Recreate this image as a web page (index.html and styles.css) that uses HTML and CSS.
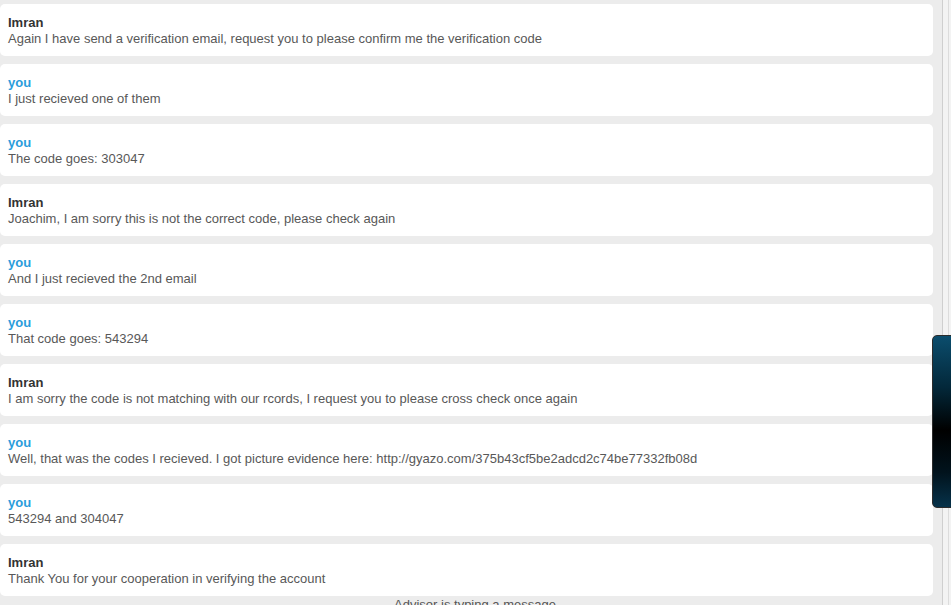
FILE: index.html
```html
<!DOCTYPE html>
<html>
<head>
<meta charset="utf-8">
<link rel="stylesheet" href="styles.css">
</head>
<body>
<div class="page">
  <div class="chat">
    <div class="messages">
      <div class="msg"><div class="name advisor">Imran</div><div class="text">Again I have send a verification email, request you to please confirm me the verification code</div></div>
      <div class="msg"><div class="name you">you</div><div class="text">I just recieved one of them</div></div>
      <div class="msg"><div class="name you">you</div><div class="text">The code goes: 303047</div></div>
      <div class="msg"><div class="name advisor">Imran</div><div class="text">Joachim, I am sorry this is not the correct code, please check again</div></div>
      <div class="msg"><div class="name you">you</div><div class="text">And I just recieved the 2nd email</div></div>
      <div class="msg"><div class="name you">you</div><div class="text">That code goes: 543294</div></div>
      <div class="msg"><div class="name advisor">Imran</div><div class="text">I am sorry the code is not matching with our rcords, I request you to please cross check once again</div></div>
      <div class="msg"><div class="name you">you</div><div class="text">Well, that was the codes I recieved. I got picture evidence here: http://gyazo.com/375b43cf5be2adcd2c74be77332fb08d</div></div>
      <div class="msg"><div class="name you">you</div><div class="text">543294 and 304047</div></div>
      <div class="msg"><div class="name advisor">Imran</div><div class="text">Thank You for your cooperation in verifying the account</div></div>
    </div>
    <div class="typing">Advisor is typing a message</div>
  </div>
  <div class="scrollstrip"><div class="inner-line"></div></div>
  <div class="side-tab"></div>
</div>
</body>
</html>
```
FILE: styles.css
```css
html, body {
  margin: 0;
  padding: 0;
  height: 100%;
  overflow: hidden;
  background: #ececec;
  font-family: "Liberation Sans", Arial, sans-serif;
}

.page {
  position: relative;
  display: flex;
  height: 605px;
  width: 951px;
}

.chat {
  width: 942px;
  flex: none;
  display: flex;
  flex-direction: column;
}

.messages {
  display: flex;
  flex-direction: column;
  gap: 8px;
  padding-top: 4px;
  padding-right: 9px;
}

.msg {
  background: #ffffff;
  border-radius: 5px;
  height: 52px;
  box-sizing: border-box;
  padding: 11px 8px 9px 8px;
}

.name {
  font-size: 13px;
  font-weight: bold;
  line-height: 16px;
}

.name.advisor {
  color: #333333;
}

.name.you {
  color: #2a9ddc;
}

.text {
  font-size: 13px;
  line-height: 16px;
  color: #585858;
  white-space: nowrap;
}

.typing {
  padding-top: 1px;
  padding-left: 8px;
  text-align: center;
  font-size: 13px;
  line-height: 16px;
  color: #555555;
}

.scrollstrip {
  flex: 1;
  border-left: 1px solid #cfcfcf;
  background: #f3f3f3;
  position: relative;
}

.inner-line {
  position: absolute;
  top: 0;
  bottom: 0;
  left: 5px;
  width: 1px;
  background: #dcdcdc;
}

.side-tab {
  position: absolute;
  left: 932px;
  top: 335px;
  width: 24px;
  height: 173px;
  box-sizing: border-box;
  border: 1px solid #2c2c2c;
  border-radius: 5px;
  background: linear-gradient(to bottom, #0b4d6d 0%, #03283a 30%, #000000 55%, #01131d 80%, #06324a 100%);
}
```
